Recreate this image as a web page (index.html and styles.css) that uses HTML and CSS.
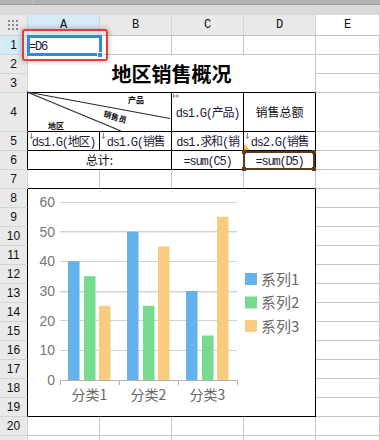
FILE: index.html
```html
<!DOCTYPE html>
<html lang="zh-CN">
<head>
	<meta charset="UTF-8">
	<title>地区销售概况</title>
	<link rel="stylesheet" href="styles.css">
</head>
<body>
	<div class="topbar"><span></span></div>
	<div class="tabbar"></div>

	<div class="sheet">
		<!-- column headers -->
		<div class="corner">
			<svg width="11" height="10" viewBox="0 0 11 10">
				<g fill="#8a8a8a">
					<rect x="0" y="0" width="2" height="2"/><rect x="4" y="0" width="2" height="2"/><rect x="8" y="0" width="2" height="2"/>
					<rect x="0" y="4" width="2" height="2"/><rect x="4" y="4" width="2" height="2"/><rect x="8" y="4" width="2" height="2"/>
					<rect x="0" y="8" width="2" height="2"/><rect x="4" y="8" width="2" height="2"/><rect x="8" y="8" width="2" height="2"/>
				</g>
			</svg>
		</div>
		<div class="colhead active">A</div>
		<div class="colhead">B</div>
		<div class="colhead">C</div>
		<div class="colhead">D</div>
		<div class="colhead last">E</div>

		<!-- row 1 -->
		<div class="rowhead active">1</div>
		<div class="cell a1">
			<span class="fx">=D6</span>
			<div class="sel"></div>
			<div class="handle"></div>
			<div class="note"></div>
		</div>
		<div class="cell"></div>
		<div class="cell"></div>
		<div class="cell"></div>
		<div class="cell"></div>

		<!-- rows 2-3 -->
		<div class="rowhead">2</div>
		<div class="cell title">地区销售概况</div>
		<div class="cell"></div>
		<div class="rowhead">3</div>
		<div class="cell"></div>

		<!-- row 4 -->
		<div class="rowhead edge">4</div>
		<div class="cell rep span2 diag">
			<svg class="diag-lines" width="143" height="38" viewBox="0 0 143 38">
				<line x1="-1" y1="-1" x2="142" y2="25.5" stroke="#2a2a2a" stroke-width="1.1"/>
				<line x1="-1" y1="-1" x2="93" y2="38" stroke="#2a2a2a" stroke-width="1.1"/>
			</svg>
			<span class="diag-label product">产品</span>
			<span class="diag-label seller">销售员</span>
			<span class="diag-label area">地区</span>
		</div>
		<div class="cell rep tall">
			<svg class="mark" width="6" height="5" viewBox="0 0 6 5"><path d="M0.5 0v4M0.5 2h5M3.5 0.5l2 1.5-2 1.5" fill="none" stroke="#8a8a8a" stroke-width="1"/></svg>
			<span class="fx">ds1.G(产品)</span>
		</div>
		<div class="cell rep tall">销售总额</div>
		<div class="cell"></div>

		<!-- row 5 -->
		<div class="rowhead edge">5</div>
		<div class="cell rep">
			<svg class="mark" width="5" height="6" viewBox="0 0 5 6"><path d="M2.5 0v5.5M0.5 3.5l2 2 2-2" fill="none" stroke="#8a8a8a" stroke-width="1"/></svg>
			<span class="fx">ds1.G(地区)</span>
		</div>
		<div class="cell rep">
			<svg class="mark" width="5" height="6" viewBox="0 0 5 6"><path d="M2.5 0v5.5M0.5 3.5l2 2 2-2" fill="none" stroke="#8a8a8a" stroke-width="1"/></svg>
			<span class="fx">ds1.G(销售员)</span>
		</div>
		<div class="cell rep"><span class="fx">ds1.求和(销售额)</span></div>
		<div class="cell rep">
			<svg class="mark" width="5" height="6" viewBox="0 0 5 6"><path d="M2.5 0v5.5M0.5 3.5l2 2 2-2" fill="none" stroke="#8a8a8a" stroke-width="1"/></svg>
			<span class="fx">ds2.G(销售额)</span>
			<i class="flag"></i>
		</div>
		<div class="cell"></div>

		<!-- row 6 -->
		<div class="rowhead edge">6</div>
		<div class="cell rep span2">总计:</div>
		<div class="cell rep"><span class="fx">=sum(C5)</span></div>
		<div class="cell rep d6">
			<span class="fx">=sum(D5)</span>
			<div class="sel2"><i class="tl"></i><i class="tr"></i><i class="bl"></i><i class="br"></i></div>
		</div>
		<div class="cell"></div>

		<!-- row 7 -->
		<div class="rowhead">7</div>
		<div class="cell edge-b"></div>
		<div class="cell edge-b"></div>
		<div class="cell edge-b"></div>
		<div class="cell edge-b"></div>
		<div class="cell"></div>

		<!-- rows 8-19: chart -->
		<div class="rowhead edge">8</div>
		<div class="cell chart">
			<svg width="287" height="227" viewBox="0 0 287 227">
				<g stroke="#d2d2d2" stroke-width="1">
					<line x1="32" y1="13.5" x2="209" y2="13.5"/>
					<line x1="32" y1="42.5" x2="209" y2="42.5"/>
					<line x1="32" y1="72.5" x2="209" y2="72.5"/>
					<line x1="32" y1="102.5" x2="209" y2="102.5"/>
					<line x1="32" y1="131.5" x2="209" y2="131.5"/>
					<line x1="32" y1="161.5" x2="209" y2="161.5"/>
				</g>
				<g stroke="#ececec" stroke-width="1">
					<line x1="32" y1="43.5" x2="209" y2="43.5"/>
					<line x1="32" y1="103.5" x2="209" y2="103.5"/>
				</g>

				<g class="ylab" text-anchor="end">
					<text x="27" y="18">60</text>
					<text x="27" y="47.5">50</text>
					<text x="27" y="77">40</text>
					<text x="27" y="107">30</text>
					<text x="27" y="136.5">20</text>
					<text x="27" y="166">10</text>
					<text x="27" y="196">0</text>
				</g>

				<!-- 分类1 -->
				<rect x="40" y="72.3" width="11.5" height="118.7" fill="#63b2ee"/>
				<rect x="56" y="87.2" width="11.5" height="103.8" fill="#76da91"/>
				<rect x="71" y="116.8" width="11.5" height="74.2" fill="#f8cb7f"/>
				<!-- 分类2 -->
				<rect x="99" y="42.7" width="11.5" height="148.3" fill="#63b2ee"/>
				<rect x="115" y="116.8" width="11.5" height="74.2" fill="#76da91"/>
				<rect x="130" y="57.5" width="11.5" height="133.5" fill="#f8cb7f"/>
				<!-- 分类3 -->
				<rect x="158" y="102" width="11.5" height="89" fill="#63b2ee"/>
				<rect x="174" y="146.5" width="11.5" height="44.5" fill="#76da91"/>
				<rect x="189" y="27.8" width="11.5" height="163.2" fill="#f8cb7f"/>

				<g stroke="#b4b4b4" stroke-width="1">
					<line x1="32" y1="191.5" x2="209" y2="191.5"/>
					<line x1="32.5" y1="191" x2="32.5" y2="196"/>
					<line x1="91.5" y1="191" x2="91.5" y2="196"/>
					<line x1="150.5" y1="191" x2="150.5" y2="196"/>
					<line x1="209.5" y1="191" x2="209.5" y2="196"/>
				</g>

				<g class="xlab" text-anchor="middle">
					<text x="61.5" y="211">分类1</text>
					<text x="120.5" y="211">分类2</text>
					<text x="179.5" y="211">分类3</text>
				</g>

				<g class="legend">
					<rect x="217" y="84" width="12" height="12" fill="#63b2ee"/>
					<text x="233" y="95.5">系列1</text>
					<rect x="217" y="107.5" width="12" height="12" fill="#76da91"/>
					<text x="233" y="119">系列2</text>
					<rect x="217" y="131" width="12" height="12" fill="#f8cb7f"/>
					<text x="233" y="142.5">系列3</text>
				</g>
			</svg>
		</div>
		<div class="cell"></div>
		<div class="rowhead edge">9</div>
		<div class="cell"></div>
		<div class="rowhead edge">10</div>
		<div class="cell"></div>
		<div class="rowhead edge">11</div>
		<div class="cell"></div>
		<div class="rowhead edge">12</div>
		<div class="cell"></div>
		<div class="rowhead edge">13</div>
		<div class="cell"></div>
		<div class="rowhead edge">14</div>
		<div class="cell"></div>
		<div class="rowhead edge">15</div>
		<div class="cell"></div>
		<div class="rowhead edge">16</div>
		<div class="cell"></div>
		<div class="rowhead edge">17</div>
		<div class="cell"></div>
		<div class="rowhead edge">18</div>
		<div class="cell"></div>
		<div class="rowhead edge">19</div>
		<div class="cell"></div>

		<!-- row 20-21 -->
		<div class="rowhead">20</div>
		<div class="cell"></div>
		<div class="cell"></div>
		<div class="cell"></div>
		<div class="cell"></div>
		<div class="cell"></div>
		<div class="rowhead">21</div>
		<div class="cell"></div>
		<div class="cell"></div>
		<div class="cell"></div>
		<div class="cell"></div>
		<div class="cell"></div>
	</div>
</body>
</html>
```

FILE: styles.css
```css
* {
	margin: 0;
	padding: 0;
	box-sizing: border-box;
}

body {
	width: 380px;
	height: 440px;
	overflow: hidden;
	background-color: #ffffff;
	font: 12px "Noto Sans CJK SC", sans-serif;
	color: #111111;
}

/* top toolbar strip */
.topbar {
	display: flex;
	height: 5px;
	background-color: #b1b1b1;
	border-bottom: 1px solid #9a9a9a;
}

.topbar span {
	width: 34px;
	border-right: 1px solid #cacaca;
}

.tabbar {
	height: 10px;
	background-color: #dadada;
}

/* sheet grid */
.sheet {
	display: grid;
	grid-template-columns: 28px repeat(4, 72px) 1fr;
	grid-template-rows: 21px repeat(3, 19px) 39px repeat(17, 19px);
}

.corner,
.colhead,
.rowhead {
	display: flex;
	align-items: center;
	justify-content: center;
	background-color: #e9e9e9;
	border-right: 1px solid #d3d3d3;
	border-bottom: 1px solid #d3d3d3;
}

.colhead {
	font: 12px "Liberation Mono", monospace;
	border-bottom-color: #c2c2c2;
}

.colhead.last {
	background-color: #ffffff;
}

.rowhead {
	font: 12px "Liberation Sans", sans-serif;
}

.corner.active,
.colhead.active,
.rowhead.active {
	background-color: #d3ebf7;
}

.rowhead.edge {
	border-right-color: #000000;
}

.cell {
	background-color: #ffffff;
	border-right: 1px solid #c6c6c6;
	border-bottom: 1px solid #c6c6c6;
}

.fx {
	font-family: "Liberation Mono", "Noto Sans CJK SC", monospace;
	letter-spacing: -1.2px;
	color: #1c1c3a;
}

/* A1: selected cell */
.a1 {
	position: relative;
	padding-left: 1px;
	line-height: 18px;
}

.sel {
	position: absolute;
	left: -1px;
	top: -1px;
	width: 75px;
	height: 21px;
	border: 3px solid #3489dc;
	z-index: 2;
}

.handle {
	position: absolute;
	left: 69px;
	top: 16px;
	width: 6px;
	height: 6px;
	background-color: #3489dc;
	border: 1px solid #ffffff;
	z-index: 3;
}

.note {
	position: absolute;
	left: -6px;
	top: -7px;
	width: 86px;
	height: 32px;
	border: 2px solid #ea3a40;
	border-radius: 3px;
	box-shadow: 0 0 5px 1px rgba(0, 0, 0, .22);
	z-index: 4;
}

/* title */
.title {
	display: flex;
	align-items: center;
	justify-content: center;
	grid-column: span 4;
	grid-row: span 2;
	border-bottom-color: #000000;
	font-size: 20px;
	font-weight: bold;
	color: #000000;
}

/* report table: long texts wrap and the rest is hidden by the cell */
.rep {
	position: relative;
	overflow: hidden;
	padding: 0 3px;
	border-color: #000000;
	text-align: center;
	line-height: 18px;
}

.tall {
	line-height: 38px;
}

.span2 {
	grid-column: span 2;
}

.edge-b {
	border-bottom-color: #000000;
}

.mark {
	position: absolute;
	left: 1px;
	top: 1px;
}

.flag {
	position: absolute;
	left: 0;
	bottom: 0;
	width: 0;
	height: 0;
	border-left: 6px solid #f2b330;
	border-top: 6px solid transparent;
}

/* diagonal header */
.diag {
	overflow: visible;
	padding: 0;
}

.diag-lines {
	position: absolute;
	left: 0;
	top: 0;
	overflow: visible;
}

.diag-label {
	position: absolute;
	font-size: 8px;
	font-weight: bold;
	line-height: 8px;
	white-space: nowrap;
	color: #111111;
}

.product {
	left: 100px;
	top: 3px;
}

.seller {
	left: 75px;
	top: 20px;
	transform: rotate(17deg);
}

.area {
	left: 20px;
	top: 29px;
}

/* D6 selection */
.d6 {
	overflow: visible;
}

.sel2 {
	position: absolute;
	left: -1px;
	top: 0;
	width: 72px;
	height: 19px;
	border: 2px solid #5c3b18;
	z-index: 2;
}

.sel2 i {
	position: absolute;
	width: 4px;
	height: 4px;
	background-color: #5c3b18;
}

.sel2 .tl { left: -3px; top: -3px; }
.sel2 .tr { right: -3px; top: -3px; }
.sel2 .bl { left: -3px; bottom: -3px; }
.sel2 .br { right: -3px; bottom: -3px; }

/* chart */
.chart {
	grid-column: span 4;
	grid-row: span 12;
	border-color: #000000;
}

.chart svg {
	display: block;
}

.ylab text {
	font: 14px "Liberation Sans", sans-serif;
	fill: #777777;
}

.xlab text {
	font: 14px "Noto Sans CJK SC", sans-serif;
	fill: #666666;
}

.legend text {
	font: 15px "Noto Sans CJK SC", sans-serif;
	fill: #6a6a6a;
}
```
